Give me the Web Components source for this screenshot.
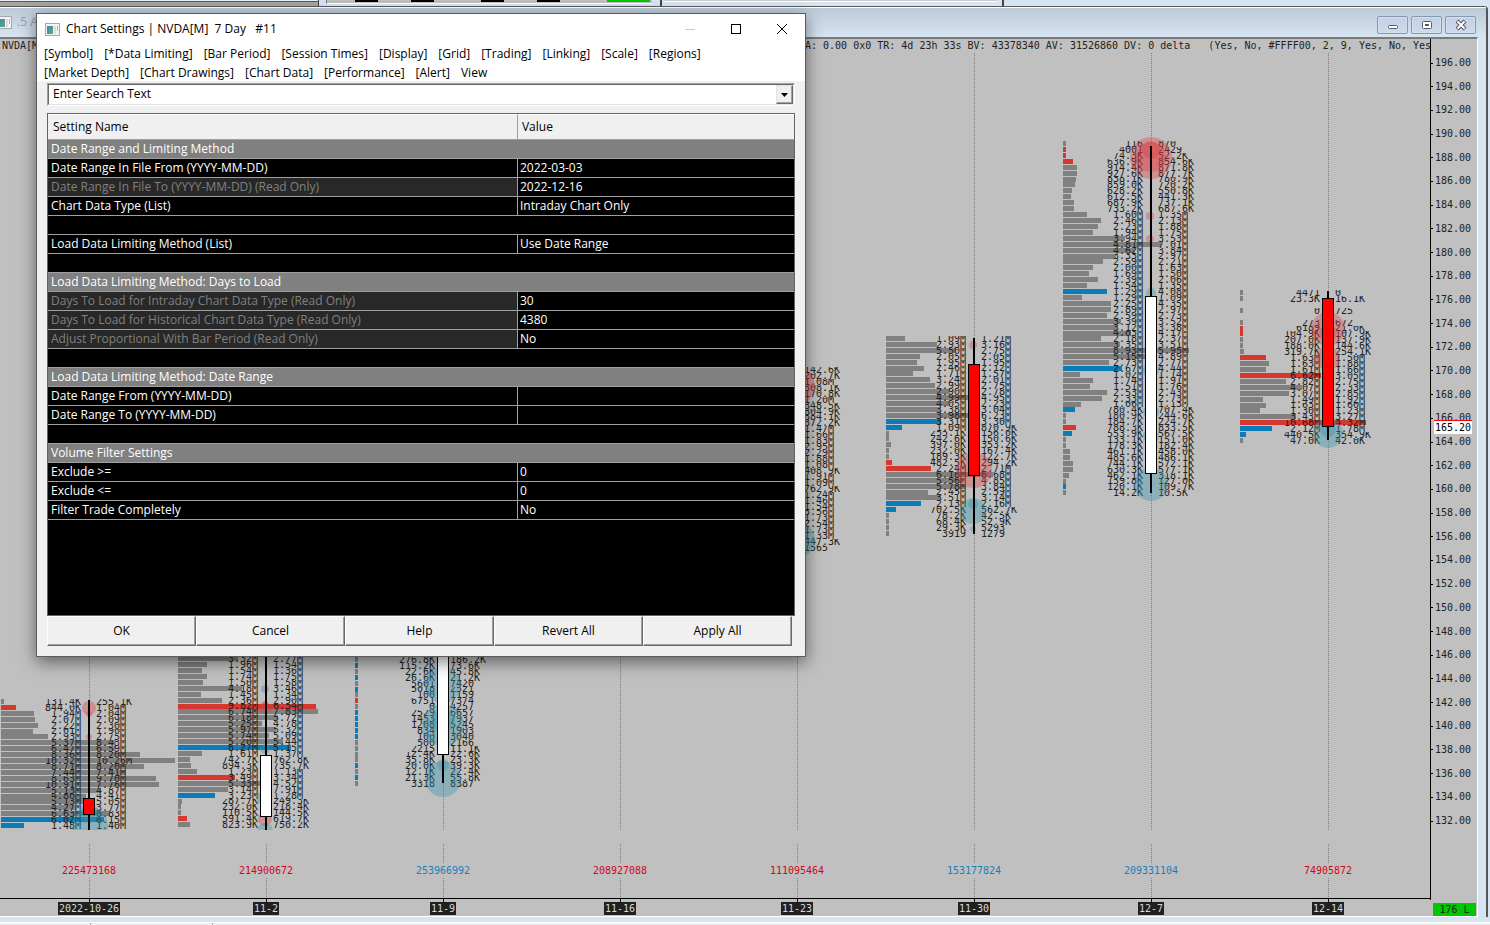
<!DOCTYPE html>
<html lang="en">
<head>
<meta charset="utf-8">
<title>Chart Settings | NVDA[M] 7 Day #11</title>
<style>
  html, body { height: 100%; }
  body {
    margin: 0; overflow: hidden; background: #d7e4f2; color: #000;
    --ui: "Open Sans", "Noto Sans", sans-serif;
    --mono: "DejaVu Sans Mono", "Liberation Mono", monospace;
    font: 12px/16px var(--ui);
  }
</style>
</head>
<body>
<trading-desk></trading-desk>

<script>
const define = (name, html, setup) => {
  const tpl = document.createElement('template');
  tpl.innerHTML = html;
  customElements.define(name, class extends HTMLElement {
    connectedCallback() {
      if (this.shadowRoot) return;
      const root = this.attachShadow({ mode: 'open' });
      root.append(tpl.content.cloneNode(true));
      if (setup) setup(root, this);
    }
  });
};

/* One entry per price level: "barWidth[colour] bid ask"; "-" is an empty level. */
const COLUMNS = [
  { date: '2022-10-26', volume: '225473168', dir: 'down', top: 646,
    candle: [647, 777, 745, 762, 'red'],
    spots: [[89, 655, 7, 'r'], [89, 661, 3, 'r'], [89, 684, 3, 'r'], [90, 772, 18, 'b'], [89, 760, 10, 'b']],
    rows: `3 131.4K 255.1K|15r 844.0K 1.04M|33 1.94M 2.04M|34 2.07M 2.09M|37 2.22M 2.30M|32 2.01M 1.90M|47 2.93M 2.75M|115 5.37M 8.43M|115 6.47M 6.59M|139 8.36M 8.20M|174 10.32M 10.26M|143 8.71M 8.20M|125 7.44M 7.41M|155 8.63M 9.70M|158 10.91M 7.76M|100 5.13M 4.87M|85 4.80M 4.41M|82 5.13M 5.05M|75 4.27M 3.77M|109 6.63M 6.83M|103b 6.02M 6.15M|23b 1.48M 1.40M` },
  { date: '11-2', volume: '214900672', dir: 'down', top: 603,
    candle: [590, 777, 702, 764, 'white'],
    spots: [[265, 636, 4, 'p'], [265, 655, 6, 'r'], [265, 651, 3, 'r'], [265, 696, 5, 'b'], [262, 745, 6, 'b'], [265, 766, 7, 'r'], [265, 778, 8, 'b']],
    rows: `60 3.32M 2.77M|29 1.96M 1.54M|24 1.54M 1.36M|29 1.74M 1.75M|25 1.50M 1.58M|64 4.18M 3.46M|23 1.45M 1.34M|44 2.36M 2.90M|138r 9.82M 6.54M|140 6.74M 7.83M|100 6.18M 5.72M|84 5.25M 4.78M|98 5.97M 5.32M|91 5.74M 5.09M|105 5.20M 5.44M|113b 8.27M 5.15M|24 1.61M 1.37M|12 742.7K 762.8K|13 894.3K 735.7K|19 1.23M 1.13M|57r 3.49M 3.34M|82 5.33M 4.52M|50 3.14M 7.91M|37b 3.23M 1.28M|4 287.7K 249.3K|3 232.0K 218.4K|3 110.5K 144.5K|9r 591.4K 619.7K|12 823.9K 750.2K` },
  { date: '11-9', volume: '253966992', dir: 'up', top: 604,
    candle: [590, 730, 590, 702, 'white'],
    spots: [[443, 632, 18, 'b'], [443, 672, 21, 'b'], [443, 668, 12, 'b'], [443, 712, 6, 'b'], [443, 726, 18, 'b']],
    rows: `3 276.8K 186.2K|3b 115.2K 73.6K|3 22.6K 45.8K|3b 26.6K 21.2K|3 5601 7420|3b 5018 2521|3 100 1159|3r 6751 7374|3 0 4257|3b 2529 6657|3b 1453 7937|3b 1208 5245|3b 834 1903|3b 100 3040|3 500 2166|3 2215 11.1K|3 12.4K 22.6K|3 35.8K 23.3K|3b 20.0K 39.3K|3 12.1K 22.4K|3b 21.3K 55.8K|3 3318 8387` },
  { date: '11-16', volume: '208927088', dir: 'down', top: 0, spots: [], rows: '' },
  { date: '11-23', volume: '111095464', dir: 'down', top: 314,
    spots: [[797, 333, 18, 'r'], [797, 423, 8, 'r'], [797, 487, 18, 'b']],
    rows: `0 . 142.6K|0 . 202.7K|0 . 1.08M|0 . 308.1K|0 . 170.8K|0 . 1.20M|0 . 348.5K|0 . 804.9K|0 . 384.1K|0 . 372.2K|0 . 1.47M|0 . 1.66M|0 . 1.83M|0 . 2.95M|0 . 2.29M|0 . 1.88M|0 . 1.08M|0 . 408.9K|0 . 1.91M|0 . 1.09M|0 . 762.9K|0 . 1.24M|0 . 1.46M|0 . 1.54M|0 . 3.56M|0 . 1.73M|0 . 2.54M|0 . 1.73M|0 . 1.33M|0 . 447.3K|0 . 1565` },
  { date: '11-30', volume: '153177824', dir: 'up', top: 283,
    candle: [285, 481, 311, 423, 'red'],
    spots: [[973, 292, 4, 'r'], [974, 417, 18, 'r'], [973, 451, 5, 'b'], [973, 458, 13, 'b'], [973, 476, 3, 'b']],
    rows: `19 1.09M 1.21M|51 2.93M 3.16M|70 5.50M 2.75M|34 2.05M 2.05M|31 1.95M 1.95M|38 2.46M 2.12M|27 1.71M 1.57M|44 3.24M 2.01M|49 2.99M 2.75M|64 2.90M 2.78M|82 4.99M 4.95M|63 4.05M 2.23M|54 3.38M 3.04M|82 3.98M 6.23M|55b 3.31M 3.30M|16b 1.09M 870.9K|3 255.1K 156.0K|3 242.6K 150.6K|5 397.0K 353.2K|3 232.0K 167.4K|3 189.3K 122.7K|6r 482.5K 294.2K|45r 2.24M 2.71M|107 6.18M 6.68M|77 5.56M 4.85M|80 5.78M 3.84M|42 2.45M 2.59M|54 3.51M 3.14M|35b 2.13M 2.16M|10b 702.5K 562.7K|3 78.2K 42.5K|3 68.4K 52.9K|3 29.3K 5293|3 3919 1279` },
  { date: '12-7', volume: '209331104', dir: 'up', top: 88,
    candle: [93, 440, 243, 421, 'white'],
    spots: [[1151, 105, 21, 'r'], [1151, 97, 9, 'r'], [1151, 104, 15, 'r'], [1150, 163, 4, 'r'], [1150, 186, 4, 'r'], [1151, 240, 5, 'b'], [1151, 317, 8, 'b'], [1151, 359, 8, 'b'], [1151, 383, 8, 'b'], [1151, 431, 17, 'b']],
    rows: `3 116 870|3r 4001 2429|3r 74.3K 52.2K|10r 636.9K 854.6K|14 914.4K 871.8K|14 927.6K 877.7K|13 838.1K 780.9K|12 859.0K 720.2K|9 628.2K 550.8K|8 612.5K 441.3K|11 687.9K 737.1K|11 733.2K 687.6K|24 1.60M 1.35M|38 2.46M 2.13M|35 2.23M 1.88M|30 1.94M 1.75M|62 3.94M 3.53M|98 4.81M 7.01M|72 4.62M 3.84M|53 3.33M 2.97M|40 2.59M 2.21M|30 2.00M 1.63M|26 1.69M 1.50M|35 2.39M 2.06M|24 1.54M 1.35M|44b 1.29M 4.08M|19 1.29M 1.09M|48 2.25M 4.35M|48 2.89M 2.97M|44 2.59M 2.73M|58 3.39M 3.52M|54 3.12M 3.38M|68 4.03M 4.17M|38 2.18M 2.37M|57 3.35M 3.51M|126 8.93M 5.95M|82 5.15M 4.89M|46 2.73M 2.77M|59b 2.67M 4.44M|17 1.02M 1.14M|30 1.74M 1.91M|27 1.51M 1.76M|44 2.53M 2.43M|39 2.33M 2.73M|18 1.06M 1.13M|12b 780.4K 707.4K|3 180.9K 244.6K|3 184.7K 224.7K|13r 788.3K 833.5K|9b 553.9K 567.5K|3 133.1K 151.0K|3 178.3K 182.4K|7 461.1K 458.0K|7 485.6K 486.1K|10 744.1K 572.1K|10 630.3K 577.1K|6 462.1K 318.1K|3 159.8K 127.0K|3b 120.1K 109.7K|3 14.2K 10.5K` },
  { date: '12-14', volume: '74905872', dir: 'down', top: 237,
    candle: [238, 387, 245, 374, 'red'],
    spots: [[1328, 276, 17, 'r'], [1328, 280, 9, 'r'], [1328, 305, 12, 'r'], [1328, 376, 8, 'b'], [1328, 380, 15, 'b']],
    rows: `3 4471 0|3 23.3K 16.1K|-|3 0 725|-|3 273 672|3r 6189 21.0K|3r 104.9K 107.9K|3 207.0K 137.9K|3 188.0K 144.6K|4 319.7K 254.1K|26r 1.63M 1.50M|29 1.63M 1.88M|26 1.61M 1.66M|81r 6.62M 3.05M|46 2.82M 2.75M|62 4.07M 2.33M|49 3.07M 2.85M|23 1.49M 1.92M|26 1.63M 1.60M|20 1.30M 1.23M|56 3.43M 3.27M|126r 10.68M 4.32M|32b 2.12M 1.78M|6b 440.5K 354.9K|3 47.0K 42.0K` }
];

define('footprint-column', `
<style>
  :host { flex: 1; min-width: 0; display: flex; flex-direction: column; position: relative; font: 10px/10px var(--mono); color: #222; }
  .plot { flex: 1; min-height: 0; position: relative; overflow: hidden; }
  .dots { width: 1px; margin-left: 89px; background: repeating-linear-gradient(#808080 0 1px, transparent 1px 2px); }
  .plot .dots { position: absolute; top: 0; bottom: 0; left: 0; }
  .levels { position: relative; display: flex; flex-direction: column; }
  .level { flex: 1; min-height: 0; overflow: hidden; position: relative; display: flex; align-items: flex-end; }
  .bar { position: absolute; left: 1px; top: 0; height: 5px; background: #808080; }
  .bar.r { background: #d4382f; } .bar.b { background: #0a7cb8; }
  .bid { flex: 0 0 81px; text-align: right; margin-bottom: -2px; position: relative; }
  .ask { margin-left: 15px; margin-bottom: -2px; position: relative; }
  svg { position: absolute; left: 0; top: 0; width: 177px; height: 100%; overflow: visible; }
  .volume { flex: none; height: 54px; margin-top: 14px; display: flex; flex-direction: column; }
  .volume .dots:first-child { height: 19px; }
  .volume .dots:last-child { flex: 1; }
  .volume span { width: 178px; text-align: center; line-height: 15px; }
  .down { color: #d3061c; } .up { color: #1a7fb9; }
  .date { flex: none; border-top: 1px solid #000; height: 17px; width: 100%; }
  .date div { width: 178px; display: flex; flex-direction: column; align-items: center; }
  .date i { width: 1px; height: 3px; background: #000; }
  .date span { background: #202020; color: #d8d8d8; padding: 0 1px; line-height: 13px; }
</style>
<div class="plot"><div class="dots"></div><div class="levels"></div></div>
<div class="volume"><div class="dots"></div><span></span><div class="dots"></div></div>
<div class="date"><div><i></i><span></span></div></div>`,
(root, host) => {
  const i = +host.getAttribute('index'), c = COLUMNS[i];
  const vol = root.querySelector('.volume span');
  vol.textContent = c.volume; vol.className = c.dir;
  root.querySelector('.date span').textContent = c.date;
  const levels = root.querySelector('.levels');
  const rows = c.rows ? c.rows.split('|') : [];
  levels.style.marginTop = c.top + 'px';
  levels.style.height = Math.round(rows.length * 5.923) + 'px';
  levels.innerHTML = rows.map(r => {
    if (r === '-') return '<div class="level"></div>';
    const [bar, bid, ask] = r.split(' ');
    const w = parseInt(bar, 10), k = bar.replace(/\d/g, '');
    return `<div class="level"><div class="bar ${k}" style="width:${w}px"></div><span class="bid">${bid === '.' ? '' : bid}</span><span class="ask">${ask}</span></div>`;
  }).join('');
  const tint = { r: '#e0393f', b: '#2f93ab', p: '#7a64b0' };
  const off = i * 177;
  let s = c.spots.map(([x, y, r, t]) => `<circle cx="${x - off}" cy="${y}" r="${r}" fill="${tint[t]}" fill-opacity=".36"/>`).join('');
  if (c.candle) {
    const [a, b, t, e, col] = c.candle;
    s += `<path d="M89 ${a}V${b}" stroke="#000" stroke-width="2"/><rect x="83.5" y="${t + .5}" width="11" height="${e - t - 1}" fill="${col}" stroke="#000"/>`;
  }
  root.querySelector('.plot').insertAdjacentHTML('beforeend', `<svg aria-hidden="true">${s}</svg>`);
});

define('price-axis', `
<style>
  :host { display: flex; flex-direction: column; position: relative; font: 10px/12px var(--mono); color: #222; }
  .scale { flex: 1; min-height: 0; border-left: 1px solid #000; padding: 18px 0 73px; display: flex; flex-direction: column; justify-content: space-between; }
  .scale div { display: flex; align-items: center; gap: 2px; height: 12px; }
  .scale div::before { content: ""; width: 2px; height: 1px; background: #000; }
  .last { position: absolute; left: 4px; top: 381px; width: 38px; box-sizing: border-box; padding-left: 1px; background: #fff; border-top: 1px solid #f00; color: #000; line-height: 13px; }
  .tag { flex: none; margin: 3px 1px 0 3px; background: #00c800; text-align: center; line-height: 13px; height: 13px; }
</style>
<div class="scale"></div><div class="last">165.20</div><div class="tag">176 L</div>`,
root => {
  const s = root.querySelector('.scale');
  s.innerHTML = Array.from({ length: 33 }, (_, i) => `<div>${(196 - i * 2).toFixed(2)}</div>`).join('');
});

define('chart-view', `
<style>
  :host { flex: 1; min-height: 0; display: grid; grid-template-columns: 1fr 47px; grid-template-rows: 100%; background: #c0c0c0; overflow: hidden; }
  .main { display: flex; flex-direction: column; min-width: 0; min-height: 0; }
  .info { flex: none; display: flex; height: 14px; font: 10px/14px var(--mono); color: #222; white-space: pre; padding-left: 2px; }
  .info span:first-child { flex: 0 0 803px; }
  .cols { flex: 1; min-height: 0; display: flex; padding-right: 14px; position: relative; }
  .cols::after { content: ""; position: absolute; right: 0; bottom: 17px; width: 14px; height: 1px; background: #000; }
</style>
<div class="main">
  <div class="info"><span>NVDA[M]</span><span>A: 0.00 0x0 TR: 4d 23h 33s BV: 43378340 AV: 31526860 DV: 0 delta   (Yes, No, #FFFF00, 2, 9, Yes, No, Yes</span></div>
  <div class="cols"></div>
</div>
<price-axis></price-axis>`,
root => {
  root.querySelector('.cols').innerHTML = COLUMNS.map((_, i) => `<footprint-column index="${i}"></footprint-column>`).join('');
});

define('window-icon', `
<style>:host { display: block; width: 15px; height: 13px; } svg { display: block; }</style>
<svg width="15" height="13" viewBox="0 0 15 13" aria-hidden="true">
  <defs><linearGradient id="g" x1="0" y1="0" x2="1" y2="1"><stop offset="0" stop-color="#4c82b4"/><stop offset="1" stop-color="#52b070"/></linearGradient></defs>
  <rect x=".5" y=".5" width="14" height="12" fill="#f4f4f4" stroke="#a4a9b0"/>
  <rect x="2" y="3" width="6" height="8" fill="url(#g)"/><rect x="9" y="3" width="2" height="8" fill="#dcdcdc"/><rect x="12" y="3" width="1" height="5" fill="#b4b4b4"/>
</svg>`);

define('chart-window', `
<style>
  :host { flex: 1; min-height: 0; display: flex; flex-direction: column; margin-right: 2px; border-top: 1px solid #5a5a5a; border-right: 2px solid #555; border-top-right-radius: 4px; background: #d7e4f2; padding-right: 8px; }
  header { flex: none; height: 30px; margin-right: -8px; padding: 0 10px 0 0; background: linear-gradient(#fff 0 1px, #bccad8 1px, #d7e4f2); display: flex; align-items: center; box-sizing: border-box; }
  window-icon { margin-left: -3px; }
  h2 { flex: 1; margin: 0 0 0 5px; font: 12px/16px var(--ui); color: #98a0a8; }
  .ctl { display: flex; gap: 3px; padding-top: 5px; }
  button { width: 31px; height: 18px; padding: 0; border: 1px solid #8797b4; border-radius: 2px; background: linear-gradient(#c5d2e3, #cddaea); display: grid; place-items: center; box-shadow: inset 0 0 0 1px #d3dfed; }
  .well { flex: 1; min-height: 0; display: flex; border-top: 2px solid #7a7a7a; border-right: 1px solid #fff; border-bottom: 1px solid #fff; }
</style>
<header><window-icon></window-icon><h2>.5 A</h2>
  <div class="ctl">
    <button aria-label="Minimize"><svg width="12" height="12"><rect x="1.500" y="6.500" width="9" height="3" rx="1" fill="#fff" stroke="#555a68"/></svg></button>
    <button aria-label="Restore"><svg width="12" height="12"><rect x="1.500" y="2.500" width="9" height="7" rx="1" fill="#fff" stroke="#555a68"/><rect x="4.500" y="5.500" width="3" height="1" fill="#fff" stroke="#555a68"/></svg></button>
    <button aria-label="Close"><svg width="12" height="12"><path d="M2 2L10 10M10 2L2 10" stroke="#555a68" stroke-width="4"/><path d="M2.500 2.500L9.500 9.500M9.500 2.500L2.500 9.500" stroke="#fff" stroke-width="2"/></svg></button>
  </div>
</header>
<div class="well"><chart-view></chart-view></div>`);

const SETTINGS = [
  ['h', 'Date Range and Limiting Method'],
  ['', 'Date Range In File From (YYYY-MM-DD)', '2022-03-03'],
  ['ro', 'Date Range In File To (YYYY-MM-DD) (Read Only)', '2022-12-16'],
  ['', 'Chart Data Type (List)', 'Intraday Chart Only'],
  ['e'],
  ['', 'Load Data Limiting Method (List)', 'Use Date Range'],
  ['e'],
  ['h', 'Load Data Limiting Method: Days to Load'],
  ['ro', 'Days To Load for Intraday Chart Data Type (Read Only)', '30'],
  ['ro', 'Days To Load for Historical Chart Data Type (Read Only)', '4380'],
  ['ro', 'Adjust Proportional With Bar Period (Read Only)', 'No'],
  ['e'],
  ['h', 'Load Data Limiting Method: Date Range'],
  ['', 'Date Range From (YYYY-MM-DD)', ''],
  ['', 'Date Range To (YYYY-MM-DD)', ''],
  ['e'],
  ['h', 'Volume Filter Settings'],
  ['', 'Exclude >=', '0'],
  ['', 'Exclude <=', '0'],
  ['', 'Filter Trade Completely', 'No']
];

define('settings-table', `
<style>
  :host { display: block; background: #000; border: 1px solid #646464; height: 501px; }
  table { width: 100%; border-collapse: separate; border-spacing: 0; table-layout: fixed; color: #fff; }
  col:first-child { width: 63%; }
  th, td { box-sizing: border-box; text-align: left; font-weight: normal; padding: 0 2px 0 3px; height: 19px; line-height: 18px; border-bottom: 1px solid #a0a0a0; white-space: nowrap; }
  td:first-child { border-right: 1px solid #a0a0a0; }
  td + td { padding-left: 2px; }
  thead th { height: 26px; line-height: 24px; background: #f0f0f0; color: #000; padding-left: 5px; border-top: 1px solid #fff; }
  thead th:first-child { border-right: 1px solid #a0a0a0; }
  thead th + th { padding-left: 4px; }
  .h th { background: #808080; }
  .e td:first-child { border-right: 0; }
  .ro td:first-child { background: #282828; color: #808080; }
</style>
<table><colgroup><col><col></colgroup><thead><tr><th>Setting Name</th><th>Value</th></tr></thead><tbody></tbody></table>`,
root => {
  const body = root.querySelector('tbody');
  for (const [kind, name, value] of SETTINGS) {
    const tr = body.insertRow();
    tr.className = kind;
    if (kind === 'h') {
      const th = document.createElement('th');
      th.colSpan = 2; th.textContent = name; tr.append(th);
    } else if (kind === 'e') {
      tr.insertCell().colSpan = 2;
    } else {
      tr.insertCell().textContent = name;
      tr.insertCell().textContent = value;
    }
  }
});

define('search-combo', `
<style>
  :host { display: flex; height: 23px; box-sizing: border-box; border: 1px solid; border-color: #a0a0a0 #fff #fff #a0a0a0; background: #fff; }
  .in { flex: 1; display: flex; border: 1px solid; border-color: #696969 #e3e3e3 #e3e3e3 #696969; }
  input { flex: 1; min-width: 0; border: 0; outline: 0; padding: 0 0 1px 4px; background: #fff; font: 12px/16px var(--ui); color: #000; }
  button { width: 17px; padding: 0; border: 1px solid; border-color: #e3e3e3 #696969 #696969 #e3e3e3; background: #f0f0f0; display: grid; place-items: center; box-shadow: inset -1px -1px #a0a0a0; }
</style>
<div class="in"><input type="text" aria-label="Search settings" value="Enter Search Text"><button aria-label="Show list"><svg width="7" height="4"><path d="M0 0H7L3.500 4Z"/></svg></button></div>`);

define('push-button', `
<style>
  :host { flex: 1; display: flex; }
  button { flex: 1; height: 30px; padding: 0; border: 1px solid; border-color: #fff #696969 #696969 #fff; background: #f0f0f0; box-shadow: inset -1px -1px #a0a0a0; font: 12px/16px var(--ui); color: #000; }
</style>
<button><slot></slot></button>`);

define('menu-row', `
<style>
  :host { display: flex; gap: 11px; height: 19px; align-items: center; }
  ::slotted(a) { color: #000; text-decoration: none; white-space: nowrap; }
</style><slot></slot>`);

define('settings-dialog', `
<style>
  :host { position: absolute; left: 36px; top: 13px; width: 770px; box-sizing: border-box; border: 1px solid #5c5c5c; background: #f0f0f0; box-shadow: 0 5px 16px rgba(0,0,0,.5); padding-bottom: 10px; }
  header { background: #fff; height: 30px; display: flex; align-items: center; padding-left: 8px; }
  h1 { flex: 1; margin: 0 0 0 6px; font: 12px/16px var(--ui); white-space: pre; }
  header button { width: 46px; height: 30px; border: 0; padding: 0; background: none; display: grid; place-items: center; }
  nav { background: #fff; padding: 0 7px; height: 37px; }
  main { padding: 2px 10px 0; }
  search-combo { margin-bottom: 7px; }
  footer { display: flex; padding: 0 13px 0 10px; }
</style>
<header><window-icon></window-icon><h1>Chart Settings | NVDA[M]  7 Day   #11</h1>
  <button aria-label="Minimize"><svg width="12" height="12"><path d="M1 6.500H11" stroke="#ccc"/></svg></button>
  <button aria-label="Maximize"><svg width="12" height="12"><rect x="1.500" y="1.500" width="9" height="9" fill="none" stroke="#000"/></svg></button>
  <button aria-label="Close"><svg width="12" height="12"><path d="M1 1L11 11M11 1L1 11" stroke="#000"/></svg></button>
</header>
<nav>
  <menu-row><a href="#">[Symbol]</a><a href="#">[*Data Limiting]</a><a href="#">[Bar Period]</a><a href="#">[Session Times]</a><a href="#">[Display]</a><a href="#">[Grid]</a><a href="#">[Trading]</a><a href="#">[Linking]</a><a href="#">[Scale]</a><a href="#">[Regions]</a></menu-row>
  <menu-row><a href="#">[Market Depth]</a><a href="#">[Chart Drawings]</a><a href="#">[Chart Data]</a><a href="#">[Performance]</a><a href="#">[Alert]</a><a href="#">View</a></menu-row>
</nav>
<main><search-combo></search-combo><settings-table></settings-table></main>
<footer><push-button>OK</push-button><push-button>Cancel</push-button><push-button>Help</push-button><push-button>Revert All</push-button><push-button>Apply All</push-button></footer>`);

define('tool-strip', `
<style>
  :host { display: flex; height: 6px; flex: none; }
  .a { width: 318px; background: linear-gradient(#e8f0f8 0 1px, #5a5a5a 1px 2px, #a5a59e 2px); border-right: 1px solid #444; }
  .b { width: 326px; margin: 0 8px 0 7px; height: 4px; background: #c0c0c0; border-left: 1px solid #777; border-bottom: 1px solid #fff; display: flex; box-sizing: border-box; padding-left: 28px; }
  .b i { flex: none; width: 23px; height: 2px; margin-right: 33px; background: #000; }
  .b i:nth-child(even) { margin-right: 47px; }
  .b i:last-child { width: 43px; margin-right: 0; background: #00c800; }
  .c, .d { border-left: 2px solid #444; display: flex; }
  .c { width: 340px; } .d { flex: 1; }
  .c::before { content: ""; flex: 1; margin: 0 5px 0 2px; height: 1px; background: #ccc; border-bottom: 1px solid #fff; }
</style>
<div class="a"></div><div class="b"><i></i><i></i><i></i><i></i><i></i></div><div class="c"></div><div class="d"></div>`);

define('trading-desk', `
<style>
  :host { display: flex; flex-direction: column; height: 100vh; position: relative; overflow: hidden; }
  .status { flex: none; margin-top: 5px; height: 2px; background: #f0f0f0; border-top: 1px solid #fff; display: flex; }
  .status i { width: 90px; border-right: 1px solid #a0a0a0; }
  .status i + i { width: 121px; }
</style>
<tool-strip></tool-strip>
<chart-window></chart-window>
<div class="status"><i></i><i></i></div>
<settings-dialog></settings-dialog>`);
</script>
</body>
</html>
